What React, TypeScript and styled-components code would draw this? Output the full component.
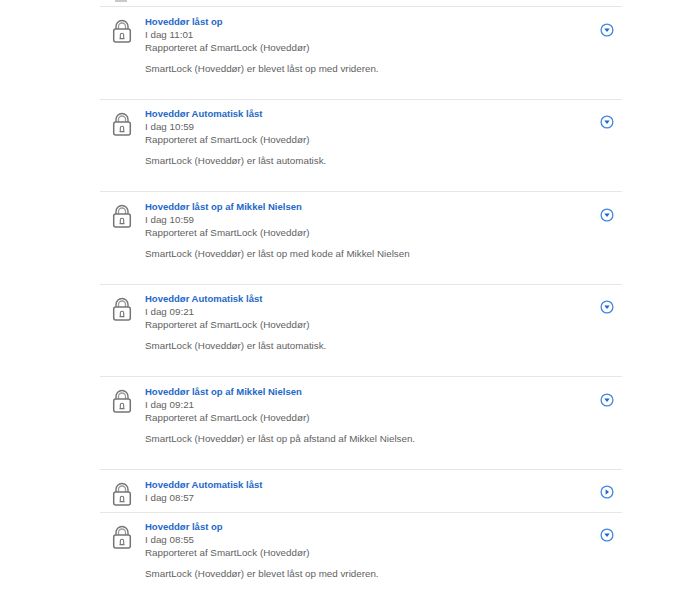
import React from "react";
import styled, { createGlobalStyle } from "styled-components";

const Global = createGlobalStyle`
  html, body { margin: 0; padding: 0; background: #fff; }
  body { font-family: "Liberation Sans", Arial, sans-serif; overflow: hidden; }
`;

const Page = styled.div`
  width: 700px;
  height: 596px;
  overflow: hidden;
  box-sizing: border-box;
  padding: 0 78px 0 100px;
`;

const PreviousRowEdge = styled.div`
  height: 6px;
  padding-left: 15px;
`;

const PreviousLockBase = styled.div`
  width: 12px;
  height: 1.5px;
  background: #c9c9c9;
`;

const List = styled.ul`
  list-style: none;
  margin: 0;
  padding: 0;
`;

const Row = styled.li<{ $h: number }>`
  display: flex;
  height: ${(p) => p.$h}px;
  box-sizing: border-box;
  border-top: 1.5px solid #e6e6e6;
  padding-top: 7.6px;
`;

const IconCell = styled.div`
  width: 45px;
  flex: none;
  padding: 4.4px 0 0 11.5px;
  box-sizing: border-box;
`;

const Body = styled.div`
  flex: 1;
  font-size: 9.8px;
  line-height: 13px;
  color: #5f5f5f;
`;

const Title = styled.div`
  color: #2468c8;
  font-weight: 700;
  font-size: 9.5px;
`;

const Message = styled.div`
  margin-top: 8px;
`;

const Toggle = styled.div<{ $open: boolean }>`
  width: 22px;
  flex: none;
  padding-top: ${(p) => (p.$open ? 8 : 7.6)}px;
`;

const Lock = () => (
  <svg width="20" height="24" viewBox="0 0 20 24" fill="none" stroke="#757575">
    <path d="M4 10V7.5a6 6 0 0 1 12 0V10" strokeWidth="1.4" />
    <path d="M6.5 10V7.5a3.5 3.5 0 0 1 7 0V10" strokeWidth="1.3" stroke="#9a9a9a" />
    <rect x="1.7" y="10" width="16.6" height="13" rx="2" strokeWidth="1.5" />
    <path d="M8.3 19.5v-3.5a1.7 1.7 0 0 1 3.4 0v3.5z M7.5 19.6h5" strokeWidth="1.1" />
  </svg>
);

const Arrow = ({ open }: { open: boolean }) => (
  <svg width="14" height="14" viewBox="0 0 14 14">
    <circle cx="7" cy="7" r="5.9" fill="#fff" stroke="#3f87e0" strokeWidth="1.3" />
    {open ? <path d="M4.3 5.6h5.4L7 9z" fill="#1f66c9" /> : <path d="M5.6 4.3v5.4L9 7z" fill="#1f66c9" />}
  </svg>
);

type Ev = { title: string; time: string; msg?: string; h: number };

const events: Ev[] = [
  { title: "Hoveddør låst op", time: "I dag 11:01", msg: "SmartLock (Hoveddør) er blevet låst op med vrideren.", h: 92.6 },
  { title: "Hoveddør Automatisk låst", time: "I dag 10:59", msg: "SmartLock (Hoveddør) er låst automatisk.", h: 92.6 },
  { title: "Hoveddør låst op af Mikkel Nielsen", time: "I dag 10:59", msg: "SmartLock (Hoveddør) er låst op med kode af Mikkel Nielsen", h: 92.6 },
  { title: "Hoveddør Automatisk låst", time: "I dag 09:21", msg: "SmartLock (Hoveddør) er låst automatisk.", h: 92.6 },
  { title: "Hoveddør låst op af Mikkel Nielsen", time: "I dag 09:21", msg: "SmartLock (Hoveddør) er låst op på afstand af Mikkel Nielsen.", h: 92.6 },
  { title: "Hoveddør Automatisk låst", time: "I dag 08:57", h: 42.8 },
  { title: "Hoveddør låst op", time: "I dag 08:55", msg: "SmartLock (Hoveddør) er blevet låst op med vrideren.", h: 84 },
];

export default function App() {
  return (
    <Page>
      <Global />
      <PreviousRowEdge><PreviousLockBase /></PreviousRowEdge>
      <List>
        {events.map((e, i) => (
          <Row key={i} $h={e.h}>
            <IconCell><Lock /></IconCell>
            <Body>
              <Title>{e.title}</Title>
              <div>{e.time}</div>
              {e.msg && <div>Rapporteret af SmartLock (Hoveddør)</div>}
              {e.msg && <Message>{e.msg}</Message>}
            </Body>
            <Toggle $open={!!e.msg}><Arrow open={!!e.msg} /></Toggle>
          </Row>
        ))}
      </List>
    </Page>
  );
}
